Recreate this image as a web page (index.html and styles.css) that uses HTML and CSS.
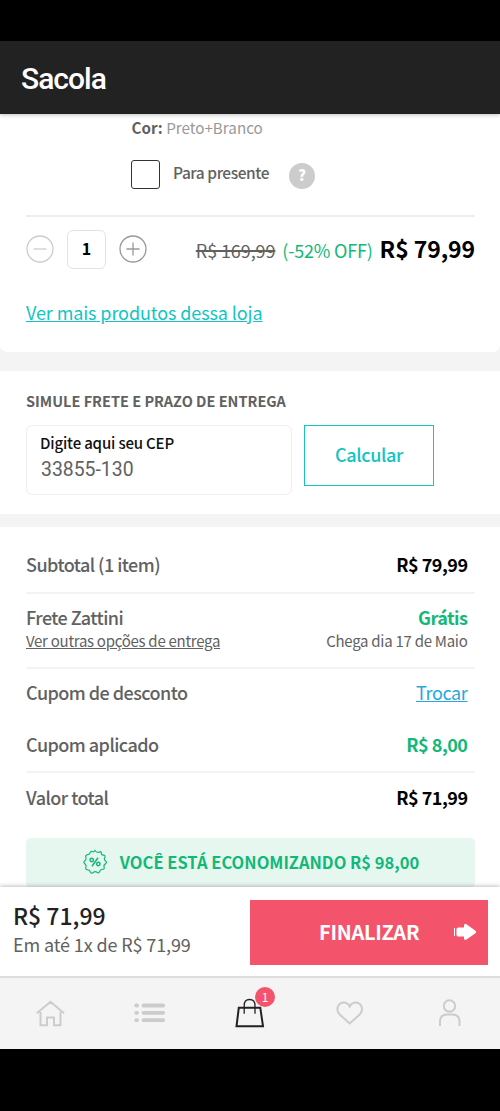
FILE: index.html
```html
<!DOCTYPE html>
<html lang="pt-BR">
<head>
<meta charset="utf-8">
<title>Sacola</title>
<link rel="stylesheet" href="styles.css">
</head>
<body>
<div class="screen">
  <div class="status-bar"></div>
  <header class="app-header"><h1>Sacola</h1></header>

  <main class="content">
    <section class="product">
      <p class="color"><b>Cor:</b> <span>Preto+Branco</span></p>
      <div class="gift">
        <span class="checkbox"></span>
        <span class="gift-label">Para presente</span>
        <span class="help">?</span>
      </div>
      <div class="price-row">
        <div class="stepper">
          <svg class="minus" width="28" height="28" viewBox="0 0 28 28"><circle cx="14" cy="14" r="13"/><path d="M7.500 14H20.500"/></svg>
          <span class="qty">1</span>
          <svg class="plus" width="28" height="28" viewBox="0 0 28 28"><circle cx="14" cy="14" r="13"/><path d="M7.500 14H20.500M14 7.500V20.500"/></svg>
        </div>
        <div class="prices"><s>R$ 169,99</s><span class="off">(-52% OFF)</span><strong>R$ 79,99</strong></div>
      </div>
      <a class="store-link">Ver mais produtos dessa loja</a>
    </section>

    <section class="shipping">
      <h2>SIMULE FRETE E PRAZO DE ENTREGA</h2>
      <div class="cep-row">
        <div class="cep-field"><span class="cep-label">Digite aqui seu CEP</span><span class="cep-value">33855-130</span></div>
        <button class="calc">Calcular</button>
      </div>
    </section>

    <section class="summary">
      <div class="row subtotal"><span class="label">Subtotal (1 item)</span><span class="value">R$ 79,99</span></div>
      <div class="freight">
        <div class="row"><span class="label">Frete Zattini</span><span class="value green">Grátis</span></div>
        <div class="row small"><a class="options">Ver outras opções de entrega</a><span>Chega dia 17 de Maio</span></div>
      </div>
      <div class="coupon">
        <div class="row"><span class="label">Cupom de desconto</span><a class="swap">Trocar</a></div>
        <div class="row"><span class="label">Cupom aplicado</span><span class="value green">R$ 8,00</span></div>
      </div>
      <div class="row total"><span class="label">Valor total</span><span class="value">R$ 71,99</span></div>
      <div class="savings">
        <svg width="26" height="26" viewBox="-13 -13 26 26">
          <path d="M0-11.500Q1.700-9 4-9.800Q5.600-10.800 6.200-9.800Q6-7 8.300-6.800Q10.700-6.600 9.900-4.900Q8.700-2.800 10-1.400Q12.500.3 10.800 1.600Q8.600 2.600 9 4.600Q9.800 7.300 7.900 7.300Q5.500 7 4.900 9Q4.100 11.400 2.600 10.700Q.4 8.900-1.500 10.300Q-3.600 12-4.600 10.200Q-5 8-7.200 7.900Q-9.800 7.600-9.200 5.700Q-8.200 3.500-9.700 2.200Q-12 .5-10.600-.8Q-8.500-2-9-4.200Q-9.900-6.900-8-7.100Q-5.600-7.300-4.900-9.200Q-4-11.300-2.500-10.400Q-1-9.400 0-11.500Z"/>
          <path class="percent" d="M3-4.300L-3 4.300"/><circle class="percent" cx="-3.300" cy="-2" r="1.700"/><circle class="percent" cx="3.300" cy="2" r="1.700"/>
        </svg>
        <span>VOCÊ ESTÁ ECONOMIZANDO R$ 98,00</span>
      </div>
    </section>
  </main>

  <div class="checkout">
    <div class="due"><strong>R$ 71,99</strong><span>Em até 1x de R$ 71,99</span></div>
    <button class="finish"><span>FINALIZAR</span>
      <svg width="24" height="18" viewBox="0 0 24 18"><path d="M1.500 5V13"/><path class="solid" d="M5.500 4.500H11V2.500Q11.200 0 13.500 1.200L22.500 7.800Q24 9 22.500 10.200L13.500 16.500Q11.200 17.600 11 15.500V13.500H5.500Q3.500 13.500 3.500 12V6Q3.500 4.500 5.500 4.500Z"/></svg>
    </button>
  </div>

  <nav class="tabs">
    <a><svg width="30" height="30" viewBox="0 0 30 30"><path d="M1.800 14.300L15.500 2.800L29 14.300M5.500 13V26.200H12V18.500H19V26.200H25.500V13"/></svg></a>
    <a><svg class="list" width="32" height="22" viewBox="0 0 32 22"><path d="M2.200 2.500H3M2.200 9.800H3M2.200 17.200H3M9.500 2.500H29.200M9.500 9.800H29.200M9.500 17.200H29.200"/></svg></a>
    <a class="active"><svg width="32" height="32" viewBox="0 0 32 32"><path d="M4.800 9.700H26.300L29 28.300H2.500Z"/><path class="handle" d="M10.200 15.700V7.500Q10.200 1.500 15.500 1.500Q21 1.500 21 7.500V15.700"/></svg><b class="badge">1</b></a>
    <a><svg width="28" height="26" viewBox="0 0 28 26"><path d="M13.700 22.500L4.200 14C-1.500 8.300 2.500 1.500 7.900 1.500Q11.600 1.500 13.700 5.500Q15.800 1.500 19.500 1.500C24.900 1.500 28.900 8.300 23.200 14Z"/></svg></a>
    <a><svg width="24" height="30" viewBox="0 0 24 30"><circle cx="11.500" cy="7" r="5.700"/><path d="M2 27V23Q2 15.500 9 15.500H14.500Q21.500 15.500 21.500 23V27"/></svg></a>
  </nav>
  <div class="system-bar"></div>
</div>
</body>
</html>
```
FILE: styles.css
```css
* { box-sizing: border-box; }
body, h1, h2, p { margin: 0; }
body { width: 500px; height: 1111px; overflow: hidden; background: #000; }
.screen { height: 1111px; display: flex; flex-direction: column; font-family: "Noto Sans CJK SC", "Noto Sans", sans-serif; font-size: 18px; line-height: 24px; color: #616161; white-space: nowrap; }
button { font: inherit; padding: 0; border: 0; border-radius: 0; }
svg { display: block; flex: none; fill: none; overflow: visible; }
.status-bar { height: 41px; flex: none; background: #000; }
.app-header { height: 73px; flex: none; padding: 20px 21px; background: #222; box-shadow: 0 1px 4px rgba(0,0,0,.25); z-index: 1; }
h1 { font: 500 30px/36px Roboto, sans-serif; letter-spacing: -1px; color: #fff; }
.content { height: 773px; flex: none; overflow: hidden; background: #f4f4f4; }
.product { height: 238px; padding: 0 25px 0 26px; background: #fff; border-radius: 0 0 7px 7px; }
.color { padding: 1px 0 1px 105.500px; font-size: 15.200px; }
.color b { font-weight: 700; }
.color span { color: #999; }
.gift { display: flex; align-items: center; height: 75px; padding: 0 0 5px 105px; }
.checkbox { width: 29px; height: 29px; margin-top: -1px; border: 1px solid #333; border-radius: 3px; }
.gift-label { margin: -6px 0 0 13px; width: 116px; font-size: 15.500px; letter-spacing: -.45px; font-weight: 500; }
.help { width: 26px; height: 26px; margin-top: 2px; border-radius: 50%; background: #ccc; color: #fff; font-size: 15px; line-height: 24px; font-weight: 900; text-align: center; }
.price-row { height: 67px; display: flex; align-items: center; justify-content: space-between; border-top: 2px solid #eee; }
.stepper { display: flex; align-items: center; gap: 13px; }
.stepper svg { stroke-width: 1.300; margin-top: -1px; }
.minus { stroke: #ccc; }
.plus { stroke: #999; }
.qty { width: 39px; height: 39px; border: 1px solid #e3e3e3; border-radius: 6px; color: #000; font-size: 16px; line-height: 34px; font-weight: 700; text-align: center; }
.prices { display: flex; align-items: baseline; padding-bottom: 1px; }
.prices s { letter-spacing: -.1px; text-decoration-thickness: 1.500px; }
.off { margin: 0 7px 0 7px; color: #12b878; letter-spacing: -.2px; }
.prices strong { color: #000; font-size: 23px; letter-spacing: -.1px; }
.store-link { display: inline-block; margin-top: 18px; color: #12c4c4; text-decoration: underline; letter-spacing: -.1px; }
.shipping { height: 143px; margin-top: 19px; padding: 18px 26px 0; background: #fff; }
h2 { font-size: 14.500px; line-height: 24px; font-weight: 700; }
.cep-row { display: flex; gap: 12px; margin-top: 12px; }
.cep-field { width: 266px; height: 70px; padding: 5px 13px; display: flex; flex-direction: column; border: 1px solid #eee; border-radius: 6px; }
.cep-label { color: #111; font-size: 15px; font-weight: 500; letter-spacing: -.17px; }
.cep-value { font: 19.400px/26px Roboto, sans-serif; margin: 2px 0 0 1px; }
.calc { width: 130px; height: 61px; padding-bottom: 3px; border: 1px solid #12c4c4; background: #fff; color: #12c4c4; font-weight: 500; line-height: 56px; letter-spacing: -.35px; }
.summary { margin-top: 13px; padding: 0 25px 0 26px; height: 380px; background: #fff; }
.row { display: flex; justify-content: space-between; padding-right: 7.500px; }
.label { font-weight: 500; letter-spacing: -.54px; font-feature-settings: "liga" 1; }
.value { color: #000; font-weight: 700; letter-spacing: -.5px; }
.value.green { color: #12b878; }
.subtotal { height: 65px; padding-top: 25px; }
.freight { height: 75px; padding-top: 11px; border-top: 2px solid #f3f3f3; }
.small { font-size: 15px; letter-spacing: -.28px; }
.options { text-decoration: underline; }
.coupon { height: 104px; padding-top: 11px; border-top: 2px solid #f3f3f3; display: flex; flex-direction: column; gap: 28px; }
.swap { color: #27a8dd; text-decoration: underline; letter-spacing: -.35px; }
.total { height: 67px; padding-top: 12px; border-top: 2px solid #f3f3f3; }
.savings { height: 50px; padding-bottom: 2px; display: flex; align-items: center; justify-content: center; gap: 12px; background: #e6f7f0; border-radius: 5px; color: #12b878; font-size: 16.500px; font-weight: 700; }
.savings svg { stroke: #12b878; stroke-width: 1.200; }
.savings .percent { stroke-width: 1.500; }
.checkout { height: 89px; flex: none; display: flex; justify-content: space-between; padding: 13px 12px 0 13px; background: #fff; box-shadow: 0 -1px 4px rgba(0,0,0,.25); z-index: 1; }
.due { display: flex; flex-direction: column; }
.due strong { font-size: 23px; line-height: 30px; color: #222; font-weight: 500; }
.due span { line-height: 28px; letter-spacing: -.12px; }
.finish { width: 238px; height: 65px; display: flex; align-items: center; padding: 0 11px 1px 69px; justify-content: space-between; background: #f4546b; color: #fff; font-size: 20px; font-weight: 700; letter-spacing: -.3px; }
.finish svg { stroke: #fff; }
.finish .solid { fill: #fff; stroke: none; }
.tabs { height: 73px; flex: none; display: grid; grid-template-columns: repeat(5, 1fr); background: #f4f4f4; border-top: 2px solid #ddd; z-index: 2; }
.tabs a { position: relative; display: flex; align-items: center; justify-content: center; }
.tabs svg { stroke: #ccc; stroke-width: 2; }
.tabs .list { stroke-width: 3.800; stroke-linecap: round; }
.tabs .active svg { stroke: #222; }
.tabs .handle { stroke-width: 1.300; }
.badge { position: absolute; left: 55px; top: 9px; width: 20px; height: 20px; border-radius: 50%; background: #f4546b; color: #fff; font-size: 12px; line-height: 19px; font-weight: 400; text-align: center; }
.system-bar { flex: 1; background: #000; }
```
